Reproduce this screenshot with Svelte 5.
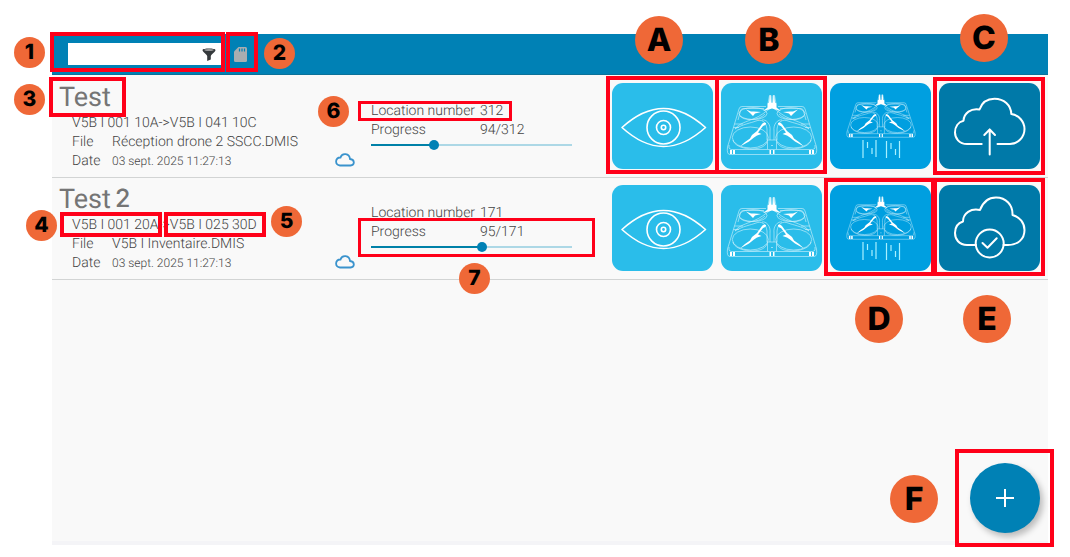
<script lang="ts">
  type Mission = {
    name: string;
    suffix?: string;
    from: string;
    to: string;
    file: string;
    date: string;
    done: number;
    total: number;
    sent: boolean;
  };

  let missions: Mission[] = $state([
    {
      name: 'Test',
      from: 'V5B I 001 10A',
      to: 'V5B I 041 10C',
      file: 'Réception drone 2 SSCC.DMIS',
      date: '03 sept. 2025 11:27:13',
      done: 94,
      total: 312,
      sent: false
    },
    {
      name: 'Test',
      suffix: '2',
      from: 'V5B I 001 20A',
      to: 'V5B I 025 30D',
      file: 'V5B I Inventaire.DMIS',
      date: '03 sept. 2025 11:27:13',
      done: 95,
      total: 171,
      sent: true
    }
  ]);

  let filter = $state('');

  // callouts over the screen: a frame and a badge each
  // inset is [x, y, width, height], x and y counted from the named edges
  const frames = [
    { h: 'left', v: 'top', inset: [50, 32, 175, 40] },
    { h: 'left', v: 'top', inset: [226, 32, 32, 40] },
    { h: 'left', v: 'top', inset: [49, 77, 77, 40] },
    { h: 'left', v: 'top', inset: [60, 212, 102, 25] },
    { h: 'left', v: 'top', inset: [164, 212, 102, 25] },
    { h: 'left', v: 'top', inset: [358, 101, 154, 20], thin: true },
    { h: 'left', v: 'top', inset: [358, 218, 237, 39], thin: true },
    { h: 'right', v: 'top', inset: [351, 76, 113, 98] },
    { h: 'right', v: 'top', inset: [243, 76, 112, 98] },
    { h: 'right', v: 'top', inset: [25, 77, 112, 98] },
    { h: 'right', v: 'top', inset: [135, 178, 111, 98] },
    { h: 'right', v: 'top', inset: [25, 178, 112, 98] },
    { h: 'right', v: 'bottom', inset: [16, 10, 99, 98] }
  ];

  const badges = [
    { text: '1', h: 'left', v: 'top', x: 14, y: 37 },
    { text: '2', h: 'left', v: 'top', x: 264, y: 38 },
    { text: '3', h: 'left', v: 'top', x: 14, y: 84 },
    { text: '4', h: 'left', v: 'top', x: 26, y: 210 },
    { text: '5', h: 'left', v: 'top', x: 271, y: 206 },
    { text: '6', h: 'left', v: 'top', x: 318, y: 96 },
    { text: '7', h: 'left', v: 'top', x: 459, y: 263 },
    { text: 'A', h: 'right', v: 'top', x: 387, y: 16, large: true },
    { text: 'B', h: 'right', v: 'top', x: 277, y: 16, large: true },
    { text: 'C', h: 'right', v: 'top', x: 62, y: 14, large: true },
    { text: 'D', h: 'right', v: 'top', x: 167, y: 295, large: true },
    { text: 'E', h: 'right', v: 'top', x: 59, y: 295, large: true },
    { text: 'F', h: 'right', v: 'bottom', x: 132, y: 34, large: true }
  ];
</script>

{#snippet droneHalf()}
  <path d="M45 23.500 H21 Q18.500 23.500 18 26 L13.500 41 L6.500 64 Q5.500 71.500 9 71.500 H51" />
  <path d="M46.500 66.500 H10 Q7 66 8 62" />
  <path d="M43 25.500 H22 Q20 25.500 19.500 28 L17 37 M13.500 41 H22 M12.500 44.500 H18" />
  <ellipse cx="32" cy="30.500" rx="14" ry="6" />
  <path d="M19 33 C23 38 38 38 44 31" />
  <path d="M51 24 C44 29 40 33 32 36 C26 38.500 17 41 14 46" />
  <path d="M14 46 C22 41 30 40 35 38 C40 36 45 38 46 46 V57" />
  <path d="M41 37 C45 36 50 41 49 48 V57" />
  <ellipse cx="29.300" cy="54.500" rx="18" ry="10.500" />
  <path d="M12 57 C14 67 42 70 46 59" />
  <g class="solid">
    <path d="M51 22 L46 25 L42 28 L51 25.500 Z" />
    <path d="M25 26.500 L30 28.500 L33 28.500 L40 29 L34 30.500 L32 33 L29.500 30.500 Z" />
    <path d="M19 63.500 L24 59 L29 55.500 L31 52 L36 48 L41 41 Q43 38.500 45 40 Q45.500 42 42 43 L37 49.500 L40.500 51 L36 52.500 L33 54.500 L28 58.500 Z" />
    <path d="M9 67 H11 V71 H9 Z M12 67 H14 V71 H12 Z" />
  </g>
{/snippet}

{#snippet drone()}
  <g class="drone">
    {@render droneHalf()}
    <g transform="translate(102 0) scale(-1 1)">{@render droneHalf()}</g>
    <path d="M46.500 57 H55.500 V66.500 H46.500 Z" />
    <path d="M47 20.500 L48.500 12.500 H50 L50.500 19.500 M55 20.500 L53.500 12.500 H52 L51.500 19.500" />
    <g class="solid">
      <path d="M48 19.500 L48.700 12.500 H49.700 L50 19.500 H52 L52.300 12.500 H53.300 L54 19.500 L55.500 20.500 V25 H46.500 V20.500 Z" />
      <path d="M48.500 67 H50 V71 H48.500 Z M52 67 H53.500 V71 H52 Z M50.500 62 H51.500 V63 H50.500 Z" />
    </g>
  </g>
{/snippet}

<div class="page">
  <main class="screen">
    <header class="toolbar">
      <div class="search">
        <input type="text" aria-label="Filter missions" bind:value={filter} />
        <svg viewBox="0 0 14 13" aria-hidden="true">
          <path d="M0.500 2 C0.500 0 13.500 0 13.500 2 C13.500 4 9.500 6 8.800 8 V11.500 L5.200 13 V8 C4.500 6 0.500 4 0.500 2 Z" fill="#35393c" />
          <ellipse cx="7" cy="2" rx="4.800" ry="0.700" fill="#bbb" />
        </svg>
      </div>
      <button class="card" aria-label="SD card">
        <svg viewBox="0 0 13 15">
          <path d="M4.500 0 H11.500 Q13 0 13 1.500 V13.500 Q13 15 11.500 15 H1.500 Q0 15 0 13.500 V4.500 Z" fill="#a9adb0" />
          <path d="M5.500 1.500 V4.500 M8 1.500 V4.500 M10.500 1.500 V4.500" stroke="#0081b5" stroke-width="1.200" />
        </svg>
      </button>
    </header>

    <div class="list">
      {#each missions as mission, i}
        <article class="row">
          <div class="info">
            <h2>{mission.name}{#if mission.suffix}<span>{mission.suffix}</span>{/if}</h2>
            <p>{mission.from}-&gt;{mission.to}</p>
            <dl>
              <dt>File</dt>
              <dd>{mission.file}</dd>
              <dt>Date</dt>
              <dd class="date">{mission.date}</dd>
            </dl>
          </div>

          <svg class="cloud" viewBox="0 0 20 14" aria-hidden="true">
            <path d="M5 12.500 H15.500 C20 12 20 6.500 15 6 C14.500 0 7 -0.500 5.500 4.500 C0 4 -0.500 12 5 12.500 Z" />
          </svg>

          <div class="progress">
            <dl>
              <dt>Location number</dt>
              <dd>{mission.total}</dd>
              <dt><label for="progress-{i}">Progress</label></dt>
              <dd>{mission.done}/{mission.total}</dd>
            </dl>
            <input
              id="progress-{i}"
              type="range"
              min="0"
              max={mission.total}
              bind:value={mission.done}
              style={`--done: ${(mission.done / mission.total) * 100}%`}
            />
          </div>

          <div class="actions">
            <button class="tile view" aria-label="View">
              <svg viewBox="0 0 101 86">
                <path d="M10 44.500 C38 19 65 19 93.500 44.500 C65 70 38 70 10 44.500 Z" />
                <circle cx="51.500" cy="44.500" r="16.500" />
                <circle cx="51.500" cy="44.500" r="7" />
                <circle cx="51.500" cy="44.500" r="2.200" />
              </svg>
            </button>
            <button class="tile view" aria-label="Drone">
              <svg viewBox="0 0 101 86">{@render drone()}</svg>
            </button>
            <button class="tile scan" aria-label="Download from drone">
              <svg viewBox="0 0 101 86">
                <g transform="translate(12 2.800) scale(0.764 0.720)">{@render drone()}</g>
                <path class="rays" d="M33 57 V75 M37.500 59 V65 M42 65 V71 M46 57 V74 M56.500 58 V75 M61 60 V66 M65.500 66 V72 M69.500 58 V75" />
              </svg>
            </button>
            <button class="tile sync" aria-label={mission.sent ? 'Sent' : 'Send'}>
              <svg viewBox="0 0 101 86">
                {#if mission.sent}
                  <path d="M37 60 H28 C20 60 16 54 16 48 C16 42 19 38 24 36.500 C24 28 32 23 41 25 C44 17 50 12.500 57 12.500 C67 12.500 74 20 73.500 30 C81 32 85.500 38 85.500 45 C85.500 54 79 60 69 60 H64.500" />
                  <circle cx="50.700" cy="58.500" r="14" />
                  <path d="M43.500 58 L48.500 62.700 L57.700 53.300" />
                {:else}
                  <path d="M42.700 61 H28 C20 61 16 55 16 49.500 C16 44 19 39 24.500 37.700 C25 30 32 25 40.500 26.500 C43 19 49 15.700 55.500 15.700 C65 15.700 72 22 72.300 31 C80 32 85.500 39 85.500 46 C85.500 54 79 61 71 61 H58.500" />
                  <path d="M50.700 71.500 V46.500 M45.300 52 L50.700 46.500 L56 52" />
                {/if}
              </svg>
            </button>
          </div>
        </article>
      {/each}
    </div>

    <button class="add" aria-label="Add mission">
      <svg viewBox="0 0 18 18"><path d="M9 0 V18 M0 9 H18" /></svg>
    </button>
  </main>

  {#each frames as { h, v, inset, thin }}
    <div
      class="frame"
      class:thin
      style={`${h}: ${inset[0]}px; ${v}: ${inset[1]}px; width: ${inset[2]}px; height: ${inset[3]}px`}
    ></div>
  {/each}
  {#each badges as { text, h, v, x, y, large }}
    <span class="badge" class:large style={`${h}: ${x}px; ${v}: ${y}px`}>{text}</span>
  {/each}
</div>

<style>
  .page {
    position: relative;
    box-sizing: border-box;
    min-height: 100vh;
    padding: 34px 22px 12px 52px;
    display: flex;
    background: #fff;
    color: #444;
    font-family: Roboto, 'Liberation Sans', sans-serif;
    font-size: 14px;
    line-height: 19px;
    font-weight: 300;
    text-rendering: geometricPrecision;
  }

  .screen {
    position: relative;
    box-sizing: border-box;
    flex: 1;
    min-width: 0;
    background: #f9f9f9;
    border-bottom: 4px solid #f4f4f7;
  }

  button {
    padding: 0;
    border: 0;
    background: none;
    cursor: pointer;
  }

  svg {
    display: block;
  }

  .toolbar {
    box-sizing: border-box;
    height: 41px;
    padding-left: 16px;
    display: flex;
    align-items: center;
    gap: 12px;
    background: #0081b5;
    border-bottom: 1px solid #0b7299;
  }

  .search {
    box-sizing: border-box;
    width: 154px;
    height: 22px;
    padding-right: 6px;
    display: flex;
    align-items: center;
    background: #fff;
  }

  .search input {
    flex: 1;
    min-width: 0;
    padding: 0 6px;
    border: 0;
    outline: 0;
    background: none;
    font: inherit;
  }

  .search svg {
    width: 14px;
    height: 13px;
  }

  .card svg {
    width: 13px;
    height: 15px;
  }

  .list {
    padding-top: 1px;
  }

  .row {
    display: grid;
    grid-template-columns: 276px 36px 201px 1fr;
    padding-left: 7px;
    border-bottom: 1px solid #d2d4d4;
  }

  .info {
    padding-top: 5px;
  }

  h2 {
    margin: 0;
    font-size: 27px;
    line-height: 33px;
    font-weight: 400;
    color: #757575;
  }

  h2 span {
    margin-left: 4px;
    font-family: Inter, sans-serif;
    font-size: 25px;
    line-height: 1;
    font-weight: 500;
    vertical-align: 1px;
  }

  p,
  dl,
  dd {
    margin: 0;
  }

  .info p,
  .info dl {
    padding-left: 13px;
  }

  dl {
    display: grid;
    grid-template-columns: 40px 1fr;
  }

  .date {
    font-size: 12px;
  }

  .cloud {
    width: 20px;
    height: 14px;
    margin-top: 77px;
    fill: none;
    stroke: #3a93cd;
    stroke-width: 1.8;
  }

  .progress {
    padding-top: 26px;
  }

  .progress dl {
    grid-template-columns: 109px 1fr;
  }

  input[type='range'] {
    display: block;
    width: 100%;
    height: 10px;
    margin: 0;
    appearance: none;
    background: linear-gradient(to right, #0081a8 var(--done), #add8e6 var(--done)) center / 100% 2px no-repeat;
  }

  input[type='range']::-webkit-slider-thumb {
    appearance: none;
    width: 10px;
    height: 10px;
    border-radius: 50%;
    background: #0081b5;
  }

  .actions {
    display: flex;
    justify-content: flex-end;
    gap: 8px;
    padding: 7px 8px 8px 0;
  }

  .tile {
    width: 101px;
    height: 86px;
    border-radius: 11px;
  }

  .tile svg {
    width: 100%;
    height: 100%;
    fill: none;
    stroke: #fff;
    stroke-width: 2;
    stroke-linejoin: round;
  }

  .view {
    background: #2abdea;
  }

  .scan {
    background: #009fe0;
  }

  .sync {
    background: #0079a8;
  }

  .view svg {
    stroke-width: 1.6;
  }

  .drone {
    stroke: #d5f3fc;
    stroke-width: 0.6;
  }

  .drone .solid {
    fill: #fff;
    stroke: none;
  }

  .rays {
    stroke: #a8f0ff;
    stroke-width: 1.2;
  }

  .sync path {
    stroke-linecap: round;
  }

  .add {
    position: absolute;
    right: 8px;
    bottom: 8px;
    width: 70px;
    height: 70px;
    display: flex;
    align-items: center;
    justify-content: center;
    border-radius: 50%;
    background: #0081b5;
    box-shadow: 3px 4px 6px rgba(0, 0, 0, 0.25);
  }

  .add svg {
    width: 18px;
    height: 18px;
    stroke: #fff;
    stroke-width: 2;
  }

  .frame {
    position: absolute;
    box-sizing: border-box;
    border: 4px solid #ff0019;
    pointer-events: none;
  }

  .frame.thin {
    border-width: 3px;
  }

  .badge {
    position: absolute;
    width: 31px;
    height: 31px;
    border-radius: 50%;
    background: #ef6837;
    color: #000;
    font-family: Inter, 'Liberation Sans', sans-serif;
    font-size: 21px;
    line-height: 31px;
    font-weight: 800;
    text-align: center;
  }

  .badge.large {
    width: 48px;
    height: 48px;
    font-size: 32px;
    line-height: 48px;
  }
</style>
